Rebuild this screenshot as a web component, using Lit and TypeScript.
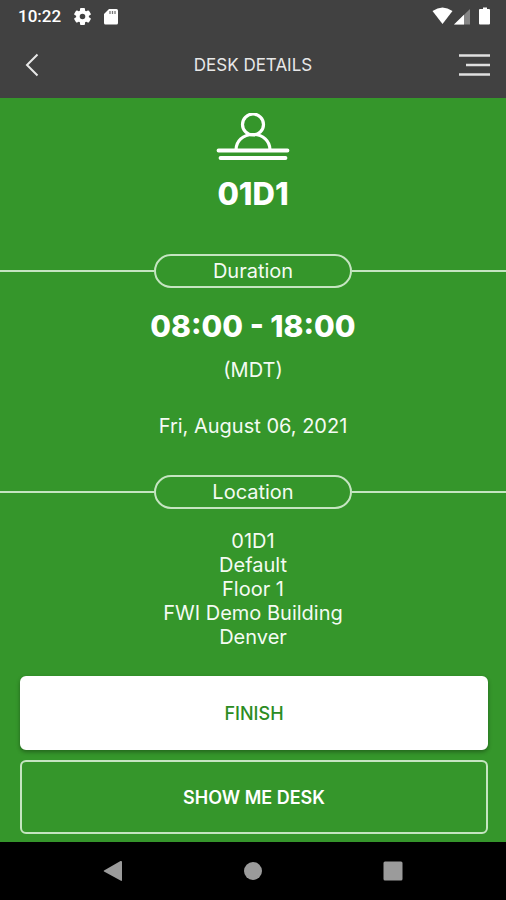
import { LitElement, html, css, svg } from "lit";
import { customElement, property } from "lit/decorators.js";

@customElement("status-bar")
class StatusBar extends LitElement {
  static styles = css`
    :host {
      display: flex;
      justify-content: space-between;
      align-items: center;
      height: 32px;
      padding: 0 14px 0 18px;
      color: #fff;
      font: 500 17px/32px Roboto, sans-serif;
    }
    .group {
      display: flex;
      align-items: center;
    }
    .left {
      gap: 13px;
    }
    svg {
      display: block;
    }
  `;

  render() {
    const teeth = [0, 60, 120, 180, 240, 300].map(
      (angle) => svg`<rect x="6" y="0" width="5" height="5" rx="1" transform="rotate(${angle} 8.5 8.5)"></rect>`
    );
    return html`
      <div class="group left">
        <time>10:22</time>
        <svg width="17" height="17" viewBox="0 0 17 17" fill="#fff" aria-hidden="true">
          ${teeth}
          <circle cx="8.5" cy="8.5" r="4.6" fill="none" stroke="#fff" stroke-width="3.6"></circle>
        </svg>
        <svg width="14" height="17" viewBox="0 0 14 17" aria-hidden="true">
          <path d="M5 1H12.5Q14 1 14 2.500V15Q14 16.500 12.500 16.500H1.500Q0 16.500 0 15V6Z" fill="#fff"></path>
          <path d="M6 3v3M8.500 3v3M11 3v3" stroke="#777" stroke-width="1.300"></path>
        </svg>
      </div>
      <div class="group">
        <svg width="60" height="18" viewBox="0 0 60 18" aria-hidden="true">
          <path d="M0.500 4Q10.500-3 20.500 4L10.500 17Z" fill="#fff"></path>
          <path d="M38 2V17.500H22Z" fill="#858585"></path>
          <path d="M32 7.800V17.500H22Z" fill="#fff"></path>
          <path d="M49 2H51V0.500H55V2H57Q58 2 58 3V16.500Q58 17.500 57 17.500H48Q47 17.500 47 16.500V3Q47 2 48 2Z" fill="#fff"></path>
        </svg>
      </div>
    `;
  }
}

@customElement("section-label")
class SectionLabel extends LitElement {
  @property() label = "";

  static styles = css`
    :host {
      display: flex;
      align-items: center;
    }
    :host::before,
    :host::after {
      content: "";
      flex: 1;
      height: 2px;
      background: #c5e5c1;
    }
    .pill {
      box-sizing: border-box;
      width: 39%;
      height: 34px;
      border: 2px solid #c5e5c1;
      border-radius: 17px;
      margin: 0;
      text-align: center;
      font-size: 20px;
      font-weight: 400;
      line-height: 31px;
    }
  `;

  render() {
    return html`<h2 class="pill">${this.label}</h2>`;
  }
}

@customElement("app-root")
class AppRoot extends LitElement {
  static styles = css`
    :host {
      display: flex;
      flex-direction: column;
      min-height: 100vh;
      background: #35962b;
      color: #f4fbf3;
      font-family: Inter, "Open Sans", sans-serif;
    }
    button {
      font-family: inherit;
      cursor: pointer;
      margin: 0;
    }
    svg {
      display: block;
    }
    .top {
      background: #414141;
    }
    .bar {
      display: grid;
      grid-template-columns: 48px 1fr 48px;
      align-items: center;
      height: 66px;
      padding: 0 8px;
    }
    .title {
      margin: 0;
      text-align: center;
      color: #e8e8e8;
      font-size: 17px;
      font-weight: 400;
    }
    .icon {
      display: flex;
      align-items: center;
      justify-content: center;
      height: 48px;
      padding: 0;
      border: 0;
      background: none;
    }
    .menu {
      justify-content: flex-end;
      padding-right: 8px;
    }
    .main {
      flex: 1;
      display: flex;
      flex-direction: column;
      text-align: center;
      font-size: 20px;
      line-height: 24px;
    }
    .desk {
      align-self: center;
      margin-top: 15px;
    }
    .name,
    .time {
      color: #fff;
      font-size: 30px;
      font-weight: 800;
      line-height: 40px;
    }
    .name {
      margin: 11px 0 40px;
      font-size: 31px;
    }
    .time {
      margin: 18px 0 12px;
    }
    .zone {
      margin: 0;
    }
    .date {
      margin: 32px 0 37px;
    }
    .place {
      margin: 20px 0 14px;
      font-style: normal;
    }
    .line {
      display: block;
    }
    .actions {
      display: grid;
      gap: 10px;
      padding: 0 18px 8px 20px;
      margin-top: auto;
    }
    .action {
      height: 74px;
      border: 2px solid #c5e5c1;
      border-radius: 6px;
      background: none;
      color: #fff;
      font-size: 18px;
      font-weight: 600;
    }
    .primary {
      border-color: #fff;
      background: #fff;
      color: #2c8c22;
      font-weight: 500;
      box-shadow: 0 2px 4px #0005;
    }
    .nav {
      display: flex;
      align-items: center;
      justify-content: center;
      gap: 92px;
      height: 58px;
      background: #000;
    }
    .nav .icon {
      width: 48px;
    }
  `;

  render() {
    const place = ["01D1", "Default", "Floor 1", "FWI Demo Building", "Denver"];
    return html`
      <header class="top">
        <status-bar></status-bar>
        <div class="bar">
          <button class="icon" aria-label="Back">
            <svg width="14" height="24" viewBox="0 0 14 24" fill="none" stroke="#e8e8e8" stroke-width="2">
              <path d="M12.500 1.500L2 12L12.500 22.500"></path>
            </svg>
          </button>
          <h1 class="title">DESK DETAILS</h1>
          <button class="icon menu" aria-label="Menu">
            <svg width="32" height="24" viewBox="0 0 32 24" stroke="#e0e0e0" stroke-width="2.500">
              <path d="M1 2.500H32M8 12H32M1 21.500H32"></path>
            </svg>
          </button>
        </div>
      </header>
      <main class="main">
        <svg class="desk" width="74" height="50" viewBox="0 0 74 50" fill="none" stroke="#fff" stroke-width="3.200" aria-hidden="true">
          <circle cx="37" cy="11.500" r="10.500"></circle>
          <path d="M20 37C20 28 27 21.500 37 21.500S54 28 54 37"></path>
          <path d="M2.500 37.500H71.500M4.500 45H69.500" stroke-width="3.800" stroke-linecap="round"></path>
        </svg>
        <h2 class="name">01D1</h2>
        <section-label label="Duration"></section-label>
        <p class="time">08:00 - 18:00</p>
        <p class="zone">(MDT)</p>
        <p class="date">Fri, August 06, 2021</p>
        <section-label label="Location"></section-label>
        <address class="place">${place.map((line) => html`<span class="line">${line}</span>`)}</address>
        <div class="actions">
          <button class="action primary">FINISH</button>
          <button class="action">SHOW ME DESK</button>
        </div>
      </main>
      <nav class="nav">
        <button class="icon" aria-label="System back">
          <svg width="20" height="22" viewBox="0 0 20 22" fill="#9b9b9b">
            <path d="M1 10.500L17.500 1Q19 0.500 19 2V20Q19 21.500 17.500 20.500L1 11.500Q0.300 11 1 10.500Z"></path>
          </svg>
        </button>
        <button class="icon" aria-label="Home">
          <svg width="20" height="20" viewBox="0 0 20 20" fill="#9b9b9b"><circle cx="10" cy="10" r="9"></circle></svg>
        </button>
        <button class="icon" aria-label="Recent apps">
          <svg width="20" height="20" viewBox="0 0 20 20" fill="#9b9b9b"><rect x="0.500" y="0.500" width="19" height="19" rx="1.500"></rect></svg>
        </button>
      </nav>
    `;
  }
}
